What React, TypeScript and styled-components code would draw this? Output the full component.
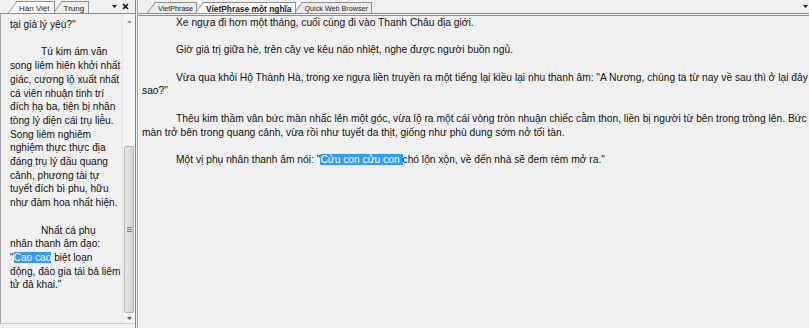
import React from "react";
import styled, { createGlobalStyle } from "styled-components";

const Global = createGlobalStyle`
  html, body { margin: 0; padding: 0; background: #f0f0f0; overflow: hidden; }
  #root { width: 809px; height: 328px; }
`;

const LINE = 13.7;

const Frame = styled.div`
  width: 809px;
  height: 328px;
  display: flex;
  background: #f0f0f0;
  overflow: hidden;
  font-family: "Liberation Sans", Arial, sans-serif;
  color: #111;
`;

const SidePanel = styled.section`
  width: 135px;
  flex: none;
  display: flex;
  flex-direction: column;
  padding-bottom: 4px;
  box-sizing: border-box;
`;

const TabStrip = styled.div<{ $pad: number; $double?: boolean }>`
  position: relative;
  isolation: isolate;
  flex: none;
  height: ${(p) => (p.$double ? 16 : 14)}px;
  display: flex;
  align-items: flex-end;
  padding-left: ${(p) => p.$pad}px;
  box-sizing: border-box;
  border-bottom: ${(p) => (p.$double ? "3px double #8f8f8f" : "1px solid #8f8f8f")};
`;

const Tab = styled.div<{ $active?: boolean; $first?: boolean }>`
  position: relative;
  z-index: ${(p) => (p.$active ? 3 : 1)};
  height: 11px;
  box-sizing: border-box;
  margin-left: ${(p) => (p.$first ? 0 : 6)}px;
  padding: 2px 3px 0 3px;
  display: flex;
  align-items: center;
  font-size: ${(p) => (p.$active ? 8.4 : 7.2)}px;
  font-weight: ${(p) => (p.$active ? 700 : 400)};
  line-height: 1;
  white-space: nowrap;
  color: #1a1a1a;
  background: ${(p) => (p.$active ? "#fcfcfc" : "#ececec")};
  border-top: 1px solid #8f8f8f;
  border-right: 1px solid #8f8f8f;

  &::before {
    content: "";
    position: absolute;
    z-index: -1;
    top: -1px;
    bottom: 0;
    left: -8px;
    width: 12px;
    background: inherit;
    border-top: 1px solid #8f8f8f;
    border-left: 1px solid #8f8f8f;
    transform-origin: bottom left;
    transform: skewX(-36deg);
  }
`;

const SideTab = styled(Tab)`
  height: 12px;
  font-weight: 400;
  font-size: 8px;
  padding: 2px 4px 0 3px;
`;

const StripTools = styled.div<{ $right?: number }>`
  margin-left: auto;
  align-self: center;
  display: flex;
  align-items: center;
  gap: 5px;
  padding-right: ${(p) => p.$right ?? 0}px;
  margin-top: -1px;
`;

const SideBody = styled.div`
  flex: 1;
  min-height: 0;
  display: flex;
  border-left: 1px solid #a3a3a3;
  border-bottom: 1px solid #cfcfcf;
`;

const TextArea = styled.div<{ $size: number; $padTop: number; $padLeft: number }>`
  flex: 1;
  min-width: 0;
  overflow: hidden;
  padding: ${(p) => p.$padTop}px 0 0 ${(p) => p.$padLeft}px;
  font-size: ${(p) => p.$size}px;
  line-height: ${LINE}px;
`;

const Para = styled.div`
  margin-bottom: ${LINE}px;
`;

const Line = styled.div<{ $indent?: number }>`
  white-space: nowrap;
  padding-left: ${(p) => p.$indent ?? 0}px;
`;

const Mark = styled.span`
  background: #3399ff;
  color: #fff;
`;

const Scrollbar = styled.div`
  width: 13px;
  flex: none;
  display: flex;
  flex-direction: column;
  background: #f3f3f3;
  border-left: 1px solid #e4e4e4;
  box-sizing: border-box;
`;

const ScrollButton = styled.div<{ $h: number }>`
  height: ${(p) => p.$h}px;
  flex: none;
  display: flex;
  align-items: center;
  justify-content: center;
`;

const Track = styled.div`
  flex: 1;
  display: flex;
  flex-direction: column;
`;

const Thumb = styled.div<{ $offset: number; $size: number }>`
  margin: ${(p) => p.$offset}px 1px 0 1px;
  height: ${(p) => p.$size}px;
  box-sizing: border-box;
  border: 1px solid #b4b4b4;
  border-radius: 2px;
  background: linear-gradient(to right, #e9e9e9, #dcdcdc 50%, #d2d2d2);
  display: flex;
  align-items: center;
  justify-content: center;
`;

const Grip = styled.span`
  width: 5px;
  height: 5px;
  background: repeating-linear-gradient(to bottom, #7d7d7d 0 1px, transparent 1px 2px);
`;

const Splitter = styled.div`
  width: 2px;
  flex: none;
  border-left: 1px solid #858585;
  box-sizing: border-box;
`;

const DocPanel = styled.section`
  flex: 1;
  min-width: 0;
  display: flex;
  flex-direction: column;
  border-left: 1px solid #a8a8a8;
`;

const Caret = ({ color = "#111" }: { color?: string }) => (
  <svg width="5" height="3" viewBox="0 0 5 3">
    <polygon points="0,0 5,0 2.5,3" fill={color} />
  </svg>
);

const CaretUp = ({ color = "#111" }: { color?: string }) => (
  <svg width="5" height="3" viewBox="0 0 5 3">
    <polygon points="0,3 5,3 2.5,0" fill={color} />
  </svg>
);

const Close = () => (
  <svg width="7" height="7" viewBox="0 0 7 7">
    <path d="M1 1 L6 6 M6 1 L1 6" stroke="#111" strokeWidth="1.6" />
  </svg>
);

type ParaData = { indent?: boolean; lines: React.ReactNode[] };

const sideText: ParaData[] = [
  { lines: ['tại giá lý yêu?"'] },
  {
    indent: true,
    lines: [
      "Tú kim ám văn",
      "song liêm hiên khởi nhất",
      "giác, cương lộ xuất nhất",
      "cá viên nhuận tinh trí",
      "đích hạ ba, tiện bị nhân",
      "tòng lý diện cái trụ liễu.",
      "Song liêm nghiêm",
      "nghiệm thực thực địa",
      "đáng trụ lý đầu quang",
      "cảnh, phương tài tự",
      "tuyết đích bì phu, hữu",
      "như đàm hoa nhất hiện.",
    ],
  },
  {
    indent: true,
    lines: [
      "Nhất cá phụ",
      "nhân thanh âm đạo:",
      <>
        "<Mark>Cao cao</Mark> biệt loạn
      </>,
      "động, đáo gia tái bả liêm",
      'tử đả khai."',
    ],
  },
];

const docText: ParaData[] = [
  { indent: true, lines: ["Xe ngựa đi hơn một tháng, cuối cùng đi vào Thanh Châu địa giới."] },
  { indent: true, lines: ["Giờ giá trị giữa hè, trên cây ve kêu náo nhiệt, nghe được người buồn ngủ."] },
  {
    indent: true,
    lines: [
      'Vừa qua khỏi Hộ Thành Hà, trong xe ngựa liền truyền ra một tiếng lại kiều lại nhu thanh âm: "A Nương, chúng ta từ nay về sau thì ở lại đây',
      'sao?"',
    ],
  },
  {
    indent: true,
    lines: [
      "Thêu kim thầm vân bức màn nhấc lên một góc, vừa lộ ra một cái vòng tròn nhuận chiếc cằm thon, liền bị người từ bên trong tròng lên. Bức",
      "màn trở bên trong quang cảnh, vừa rồi như tuyết da thịt, giống như phù dung sớm nở tối tàn.",
    ],
  },
  {
    indent: true,
    lines: [
      <>
        Một vị phụ nhân thanh âm nói: "<Mark>Cửu con cửu con </Mark>chó lộn xộn, về đến nhà sẽ đem rèm mở ra."
      </>,
    ],
  },
];

const Paragraphs = ({ data, indent }: { data: ParaData[]; indent: number }) => (
  <>
    {data.map((p, i) => (
      <Para key={i}>
        {p.lines.map((l, j) => (
          <Line key={j} $indent={p.indent && j === 0 ? indent : 0}>
            {l}
          </Line>
        ))}
      </Para>
    ))}
  </>
);

export default function App() {
  return (
    <>
      <Global />
      <Frame>
        <SidePanel>
          <TabStrip $pad={16}>
            <SideTab $first $active>
              Hán Việt
            </SideTab>
            <SideTab>Trung</SideTab>
            <StripTools $right={6}>
              <Caret />
              <Close />
            </StripTools>
          </TabStrip>
          <SideBody>
            <TextArea $size={10.15} $padTop={4} $padLeft={9}>
              <Paragraphs data={sideText} indent={31} />
            </TextArea>
            <Scrollbar>
              <ScrollButton $h={14}>
                <CaretUp color="#9a9a9a" />
              </ScrollButton>
              <Track>
                <Thumb $offset={118} $size={167}>
                  <Grip />
                </Thumb>
              </Track>
              <ScrollButton $h={10}>
                <Caret color="#5a5a5a" />
              </ScrollButton>
            </Scrollbar>
          </SideBody>
        </SidePanel>
        <Splitter />
        <DocPanel>
          <TabStrip $pad={17} $double>
            <Tab $first>VietPhrase</Tab>
            <Tab $active>VietPhrase một nghĩa</Tab>
            <Tab>Quick Web Browser</Tab>
            <StripTools $right={1}>
              <Caret />
            </StripTools>
          </TabStrip>
          <TextArea $size={10.25} $padTop={0} $padLeft={4}>
            <Paragraphs data={docText} indent={34} />
          </TextArea>
        </DocPanel>
      </Frame>
    </>
  );
}
